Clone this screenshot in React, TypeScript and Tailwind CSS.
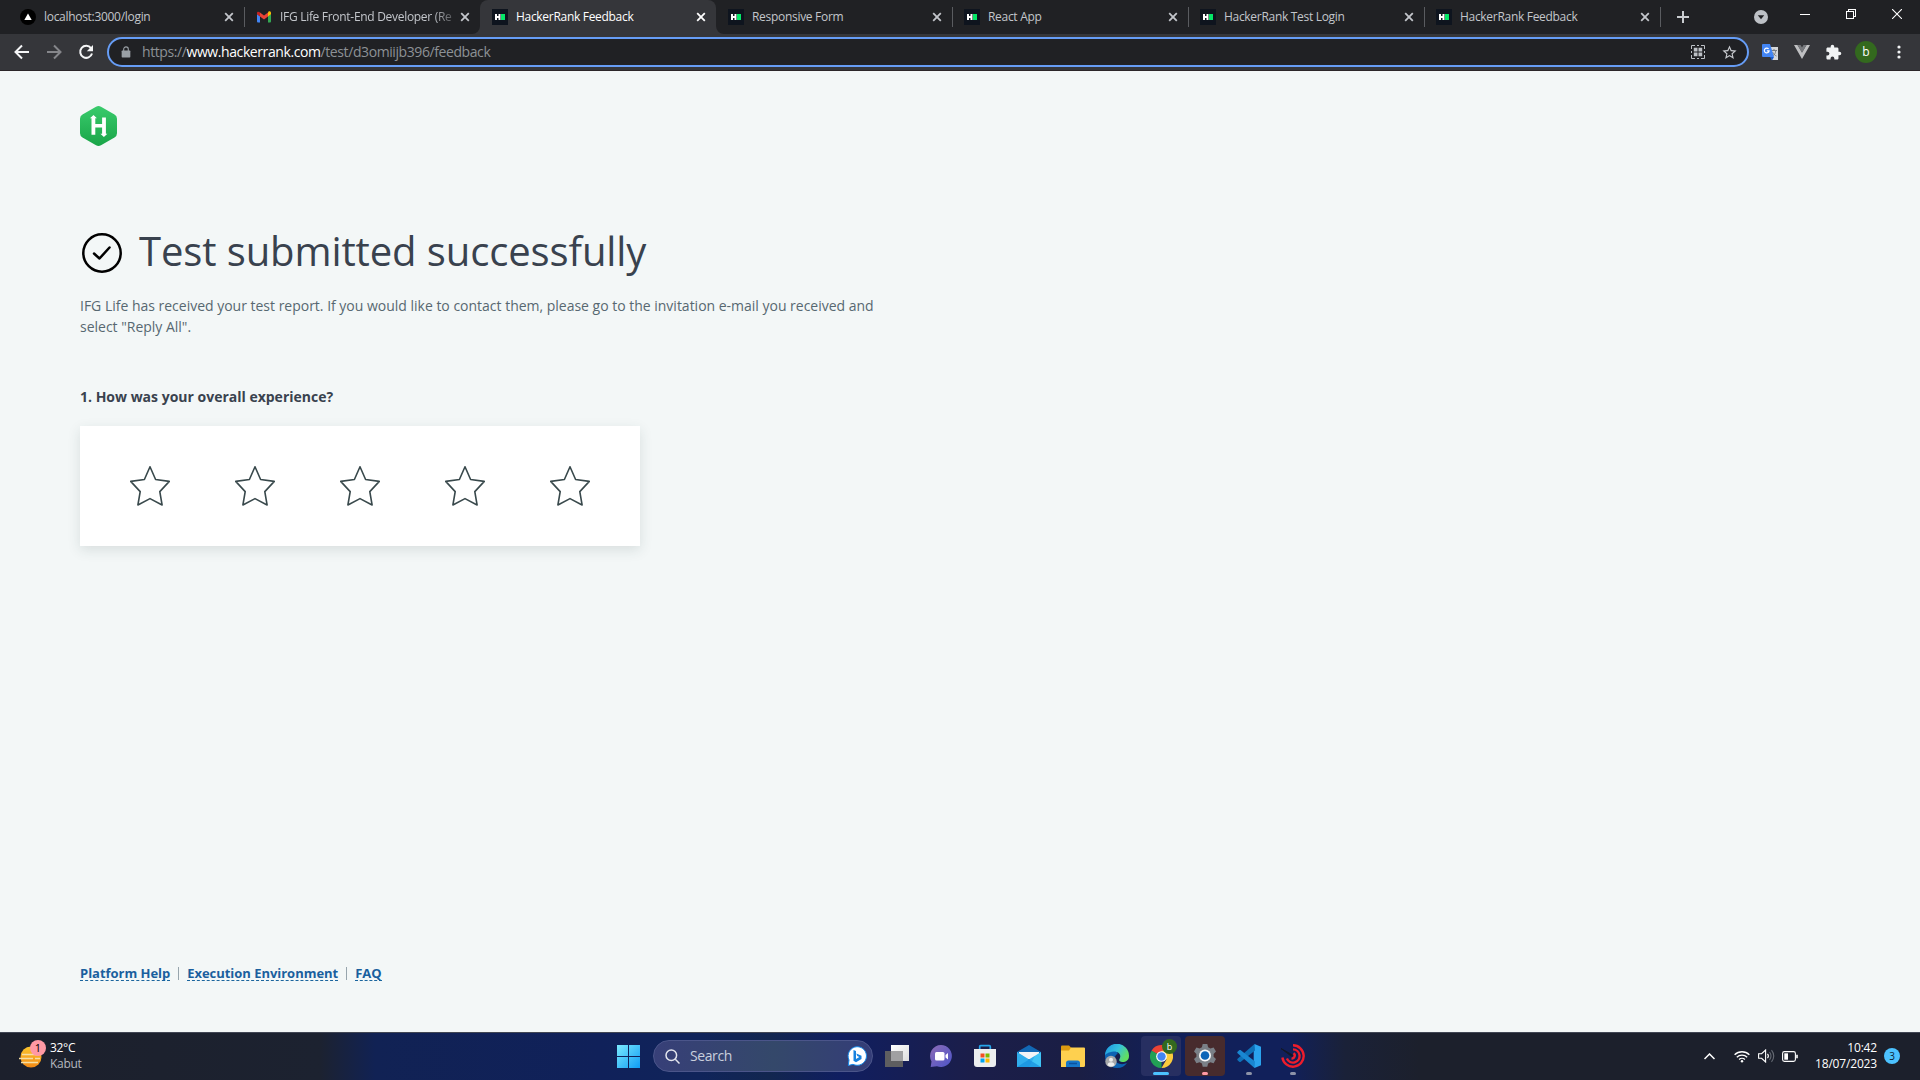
import React from "react";

type P = { className?: string };

const Close = ({ active }: { active?: boolean }) => (
  <svg viewBox="0 0 16 16" className={active ? "size-4 text-white" : "size-4 text-[#c3c6cb]"}>
    <path d="M4.2 4.2l7.6 7.6M11.8 4.2l-7.6 7.6" stroke="currentColor" strokeWidth="1.8" fill="none" />
  </svg>
);

const HrFavicon = () => (
  <svg viewBox="0 0 16 16" className="size-4 shrink-0">
    <rect width="16" height="16" fill="#0e141e" />
    <path d="M3 5h2v2h1.500v-2h2v6h-2v-2h-1.500v2h-2z" fill="#fff" />
    <rect x="9" y="5" width="4" height="6" fill="#05e767" />
  </svg>
);

const NextFavicon = () => (
  <svg viewBox="0 0 16 16" className="size-4 shrink-0">
    <circle cx="8" cy="8" r="8" fill="#000" />
    <path d="M8 4.500l3.700 6.500h-7.400z" fill="#fff" />
  </svg>
);

const GmailFavicon = () => (
  <svg viewBox="0 0 16 16" className="size-4 shrink-0">
    <path d="M1 5v7.500a1 1 0 0 0 1 1h2v-6.300z" fill="#4285f4" />
    <path d="M12 13.500h2a1 1 0 0 0 1-1v-7.500l-3 2.200z" fill="#34a853" />
    <path d="M12 3.500v4l3-2.300v-1.200c0-1.500-1.500-2.200-2.600-1.300z" fill="#fbbc04" />
    <path d="M4 7.500v-4l4 3 4-3v4l-4 3z" fill="#ea4335" />
    <path d="M1 4v1.200l3 2.300v-4l-.4-.3c-1.100-.9-2.600-.6-2.600.8z" fill="#c5221f" />
  </svg>
);

type TabData = { title: string; icon: React.ReactNode; active?: boolean; sep?: boolean; fade?: boolean };

const tabs: TabData[] = [
  { title: "localhost:3000/login", icon: <NextFavicon />, sep: true },
  { title: "IFG Life Front-End Developer (Re", icon: <GmailFavicon />, fade: true },
  { title: "HackerRank Feedback", icon: <HrFavicon />, active: true },
  { title: "Responsive Form", icon: <HrFavicon />, sep: true },
  { title: "React App", icon: <HrFavicon />, sep: true },
  { title: "HackerRank Test Login", icon: <HrFavicon />, sep: true },
  { title: "HackerRank Feedback", icon: <HrFavicon />, sep: true },
];

const Tab = ({ t }: { t: TabData }) => (
  <div
    className={
      t.active
        ? "relative flex h-[34px] w-[236px] items-center rounded-t-lg bg-[#35363a] pl-3 pr-[7px]"
        : "relative flex h-[34px] w-[236px] items-center pl-3 pr-[7px]"
    }
  >
    {t.icon}
    <div
      className={`ml-2 w-[173px] whitespace-nowrap text-[12px] leading-4 ${t.active ? "text-white" : "text-[#c3c6cb]"} ${t.fade ? "tracking-[-0.3px] [mask-image:linear-gradient(to_right,black_88%,rgba(0,0,0,0.3))]" : "tracking-[-0.3px]"}`}
    >
      {t.title}
    </div>
    <div className="ml-auto">
      <Close active={t.active} />
    </div>
    {t.sep && <span className="absolute -right-px top-[7px] h-5 w-px bg-[#5a5c60]" />}
    {t.active && (
      <>
        <svg viewBox="0 0 8 8" className="absolute -left-2 bottom-0 size-2">
          <path d="M8 0v8h-8a8 8 0 0 0 8-8z" fill="#35363a" />
        </svg>
        <svg viewBox="0 0 8 8" className="absolute -right-2 bottom-0 size-2">
          <path d="M0 0v8h8a8 8 0 0 1-8-8z" fill="#35363a" />
        </svg>
      </>
    )}
  </div>
);

const TabStrip = () => (
  <div className="flex h-[34px] bg-[#202124] pl-2">
    {tabs.map((t, i) => (
      <Tab key={i} t={t} />
    ))}
    <svg viewBox="0 0 14 14" className="ml-[16px] mt-[10px] size-[14px] text-[#c9ccd0]">
      <path d="M7 1v12M1 7h12" stroke="currentColor" strokeWidth="2" />
    </svg>
    <svg viewBox="0 0 14 14" className="ml-[64px] mt-[10px] size-[14px]">
      <circle cx="7" cy="7" r="7" fill="#bdc1c6" />
      <path d="M3.800 5.300h6.400l-3.200 4z" fill="#202124" />
    </svg>
    <svg viewBox="0 0 10 10" className="ml-[32px] mt-[9px] size-[10px]" shapeRendering="crispEdges">
      <path d="M0 5.500h10" stroke="#fff" />
    </svg>
    <svg viewBox="0 0 10 10" className="ml-[36px] mt-[9px] size-[10px]" shapeRendering="crispEdges" fill="none" stroke="#fff">
      <path d="M.5 2.500h7v7h-7zM2.500 2.500v-2h7v7h-2" />
    </svg>
    <svg viewBox="0 0 10 10" className="ml-[36px] mt-[9px] size-[10px]">
      <path d="M0 0l10 10M10 0l-10 10" stroke="#fff" strokeWidth="1.100" />
    </svg>
  </div>
);

const Toolbar = () => (
  <div className="flex h-[37px] items-center border-b border-[#2b2629] bg-[#35363a] pl-[14px]">
    <svg viewBox="0 0 16 16" className="size-4" fill="none" stroke="#f5f6f7" strokeWidth="2">
      <path d="M15 8h-13M8 1.500l-6.500 6.500 6.500 6.500" />
    </svg>
    <svg viewBox="0 0 16 16" className="ml-4 size-4" fill="none" stroke="#85868a" strokeWidth="2">
      <path d="M1 8h13M8 1.500l6.500 6.500-6.500 6.500" />
    </svg>
    <svg viewBox="0 0 16 16" className="ml-4 size-4" fill="none" stroke="#f5f6f7" strokeWidth="2">
      <path d="M13 4.200a6 6 0 1 0 1 5.300" />
      <path d="M15 1v6.300h-6.200z" fill="#f5f6f7" stroke="none" />
    </svg>
    <div className="ml-[13px] flex h-[30px] w-[1642px] items-center rounded-full border-2 border-[#669df6] bg-[#202124] pl-[12px] pr-[9px]">
      <svg viewBox="0 0 10 13" className="h-[12px] w-[10px]">
        <path d="M1 5h8q.7 0 .7.700v6q0 .8-.7.800h-8q-.7 0-.7-.8v-6q0-.7.700-.7z" fill="#9aa0a6" />
        <path d="M2.500 5.500v-2a2.500 2.500 0 0 1 5 0v2" fill="none" stroke="#9aa0a6" strokeWidth="1.200" />
      </svg>
      <div className="ml-[11px] whitespace-nowrap text-[14px] leading-5 tracking-[-0.41px] text-[#8d9196]">
        https://<span className="text-white">www.hackerrank.com</span>/test/d3omiijb396/feedback
      </div>
      <svg viewBox="0 0 14 14" className="ml-auto size-[14px]" fill="none" stroke="#bdc1c6">
        <path d="M.5 4v-3.500h3.500M6 .5h2M10 .5h3.500v3.500M13.500 6v2M13.500 10v3.500h-3.500M8 13.500h-2M4 13.500h-3.500v-3.500M.5 8v-2" />
        <path d="M2.800 2.800h3.700v3.700h-3.700zM7.500 2.800h3.700v3.700h-3.700zM2.800 7.500h3.700v3.700h-3.700zM7.500 7.500h3.700v3.700h-3.700z" fill="#bdc1c6" stroke="none" />
      </svg>
      <svg viewBox="0 0 24 24" className="ml-[16px] size-[17px]">
        <path
          d="M22 9.240l-7.190-.62L12 2 9.190 8.630 2 9.240l5.460 4.730L5.820 21 12 17.270 18.180 21l-1.630-7.030L22 9.240zM12 15.400l-3.760 2.270 1-4.280-3.320-2.880 4.380-.38L12 6.100l1.710 4.040 4.380.38-3.320 2.880 1 4.280L12 15.400z"
          fill="#c8cbcf"
        />
      </svg>
    </div>
    <svg viewBox="0 0 17 17" className="ml-[13px] size-[17px]">
      <path d="M6 3h10v13h-6z" fill="#d5d7da" />
      <path d="M9 6.500h6M12 5v1.500M10.500 12c2-1 3-3 3.200-5M10.500 8c1 2 2.500 3.500 4 4" stroke="#6f7378" fill="none" strokeWidth=".9" />
      <path d="M1 0h7l4 13h-11q-1 0-1-1v-11q0-1 1-1z" fill="#4285f4" />
      <path d="M8 13h4l-2 3.500z" fill="#1b5bcb" />
      <path d="M6.600 5a2.400 2.400 0 1 0 .5 1.800h-2.200" fill="none" stroke="#fff" strokeWidth="1.200" />
    </svg>
    <svg viewBox="0 0 16 14" className="ml-[15px] h-[14px] w-4">
      <path d="M0 0h3.500l4.500 7.500 4.500-7.500h3.500l-8 14z" fill="#bfc0c2" />
      <path d="M3.500 0h3l1.500 2.600 1.500-2.600h3l-4.500 7.700z" fill="#77797d" />
    </svg>
    <svg viewBox="0 0 24 24" className="ml-[15px] size-[17px]">
      <path d="M20.500 11H19V7c0-1.100-.9-2-2-2h-4V3.500a2.500 2.500 0 0 0-5 0V5H4c-1.100 0-2 .9-2 2v3.800h1.500a2.700 2.700 0 0 1 0 5.400H2V20c0 1.100.9 2 2 2h3.800v-1.500a2.700 2.700 0 0 1 5.400 0V22H17c1.100 0 2-.9 2-2v-4h1.500a2.500 2.500 0 0 0 0-5z" fill="#f1f3f4" />
    </svg>
    <div className="ml-[13px] grid size-[22px] place-items-center rounded-full bg-[#33691e] text-[12px] leading-none text-white">b</div>
    <svg viewBox="0 0 4 14" className="ml-[20px] h-[14px] w-1">
      <circle cx="2" cy="2" r="1.600" fill="#f1f3f4" />
      <circle cx="2" cy="7" r="1.600" fill="#f1f3f4" />
      <circle cx="2" cy="12" r="1.600" fill="#f1f3f4" />
    </svg>
  </div>
);

const Logo = () => (
  <svg viewBox="0 0 37 40" className="block h-10 w-[37px]">
    <defs>
      <linearGradient id="hr" x1="0" y1="0" x2="0" y2="1">
        <stop offset="0" stopColor="#39cb6c" />
        <stop offset="1" stopColor="#19a548" />
      </linearGradient>
    </defs>
    <path
      d="M16 .8q2.500-1.400 5 0l13.500 7.800q2.500 1.400 2.500 4.200v14.400q0 2.800-2.500 4.200l-13.500 7.800q-2.500 1.400-5 0l-13.500-7.800q-2.500-1.400-2.500-4.200v-14.400q0-2.800 2.500-4.200z"
      fill="url(#hr)"
    />
    <path
      d="M13.500 9l3.400 3.200h-1.600v5.800h6.800v-6.500h3.800v16.300h1.500l-3.500 3.200-3.500-3.200h1.700v-6.200h-6.800v7.200h-3.800v-16.600h-1.500z"
      fill="#fff"
    />
  </svg>
);

const Star = () => (
  <svg viewBox="0 0 40 40" className="size-10" fill="none" stroke="#39494c" strokeWidth="1.600" strokeLinejoin="round">
    <path d="M20 .8l5.600 12.700 13.700 1.900-9.500 10.200 2.300 13.400-12.100-6.400-12.100 6.400 2.300-13.400-9.500-10.200 13.700-1.900z" />
  </svg>
);

const Link = ({ children }: { children: React.ReactNode }) => (
  <a className="border-b border-dashed border-[#1a659e] text-[13px] font-bold leading-[14px] tracking-[-0.03px] text-[#1a5f9e]">{children}</a>
);

const Page = () => (
  <main className="flex h-[961px] flex-col items-start bg-[#f3f7f7] pl-20 pt-[35px]">
    <Logo />
    <div className="mt-[76px] flex h-[60px] items-center">
      <svg viewBox="0 0 40 40" className="ml-[2px] mt-[2px] size-10" fill="none" stroke="#000" strokeWidth="2.500">
        <circle cx="20" cy="20" r="18.700" />
        <path d="M12 20.500l5.500 5 10-11" strokeLinecap="round" strokeLinejoin="round" />
      </svg>
      <h1 className="-mt-[2px] ml-[17px] whitespace-nowrap text-[40px] leading-[60px] tracking-[-0.1px] text-[#39424e]">
        Test submitted successfully
      </h1>
    </div>
    <p className="mt-[13px] w-[800px] text-[14px] leading-[21px] tracking-[-0.01px] text-[#576871]">
      IFG Life has received your test report. If you would like to contact them, please go to the invitation e-mail you received and
      select "Reply All".
    </p>
    <h2 className="mt-[50px] text-[14px] font-bold leading-[20px] text-[#39424e]">1. How was your overall experience?</h2>
    <div className="mt-[19px] flex h-[120px] w-[560px] items-center justify-between bg-white px-[50px] shadow-[0_4px_12px_rgba(40,60,60,0.13)]">
      {[0, 1, 2, 3, 4].map((i) => (
        <Star key={i} />
      ))}
    </div>
    <div className="mt-[420px] flex items-center">
      <Link>Platform Help</Link>
      <span className="ml-[8px] mr-[8px] h-[13px] w-px bg-[#97a5ad]" />
      <Link>Execution Environment</Link>
      <span className="ml-[8px] mr-[8px] h-[13px] w-px bg-[#97a5ad]" />
      <Link>FAQ</Link>
    </div>
  </main>
);

const Cell = ({ children, className = "" }: P & { children: React.ReactNode }) => (
  <div className={`relative grid size-10 shrink-0 place-items-center rounded ${className}`}>{children}</div>
);

const Dot = ({ className }: P) => <span className={`absolute bottom-[1px] left-1/2 h-[3px] -translate-x-1/2 rounded-full ${className}`} />;

const TaskIcons = () => (
  <div className="flex items-center">
    <svg viewBox="0 0 23 23" className="size-[23px]">
      <defs>
        <linearGradient id="win" x1="0" y1="0" x2="1" y2="1">
          <stop offset="0" stopColor="#7beafe" />
          <stop offset="1" stopColor="#0f9cf5" />
        </linearGradient>
      </defs>
      <path d="M0 0h11v11h-11zM12 0h11v11h-11zM0 12h11v11h-11zM12 12h11v11h-11z" fill="url(#win)" />
    </svg>
    <div className="ml-[13px] flex h-8 w-[220px] items-center rounded-full border border-[#4b558a] bg-[linear-gradient(90deg,#373f78,#34486a_55%,#343d78)] pl-[11px] pr-[5px]">
      <svg viewBox="0 0 15 15" className="size-[15px]" fill="none" stroke="#e4e6ee" strokeWidth="1.500">
        <circle cx="6.300" cy="6.300" r="5.300" />
        <path d="M10.300 10.300l4.200 4.200" />
      </svg>
      <span className="ml-[10px] text-[14px] leading-5 tracking-[-0.4px] text-[#c9cfdd]">Search</span>
      <svg viewBox="0 0 20 20" className="ml-auto size-5">
        <path d="M10 .7a9.300 9.300 0 1 1-4 17.600l-4.700 1.200.7-5.500a9.300 9.300 0 0 1 8-13.300z" fill="#fff" stroke="#1689e8" strokeWidth="1" />
        <path d="M6.500 4l2.500 1v8l3.300-1.900-2-1-1-2.600 5.200 2.200v3.300l-5.500 3.200-2.500-1.500z" fill="#1682df" />
      </svg>
    </div>
    <svg viewBox="0 0 24 22" className="ml-3 h-[22px] w-6">
      <defs>
        <linearGradient id="tv" x1="0" y1="0" x2="1" y2="1">
          <stop offset="0" stopColor="#fff" />
          <stop offset="1" stopColor="#ddd" />
        </linearGradient>
      </defs>
      <rect x="6" y="0" width="18" height="16" fill="url(#tv)" />
      <rect x="0" y="6" width="18" height="16" fill="#5e5e60" />
      <rect x="6" y="6" width="12" height="10" fill="#a0a0a2" />
    </svg>
    <div className="ml-3 flex items-center gap-1">
      <Cell>
        <svg viewBox="0 0 24 24" className="size-6">
          <defs>
            <linearGradient id="chat" x1="0" y1="0" x2="1" y2="1">
              <stop offset="0" stopColor="#8d6bb5" />
              <stop offset="1" stopColor="#4c55c9" />
            </linearGradient>
          </defs>
          <path d="M12 1a11 11 0 1 1-4 21.300l-6.300.7.800-5.500a11 11 0 0 1 9.500-16.500z" fill="url(#chat)" />
          <rect x="6" y="8" width="9.500" height="8.500" rx="1.500" fill="#fff" />
          <path d="M16.500 11l2.500-2v6.500l-2.500-2z" fill="#fff" />
        </svg>
      </Cell>
      <Cell>
        <svg viewBox="0 0 24 24" className="size-6">
          <path d="M6.700 6v-3.300q0-1 1-1h8.600q1 0 1 1v3.300" fill="none" stroke="#25a5ea" strokeWidth="1.700" />
          <path d="M1 5h22v15q0 3-3 3h-16q-3 0-3-3z" fill="#eceeef" />
          <path d="M7.500 9.500h4v4h-4z" fill="#f25022" />
          <path d="M12.500 9.500h4v4h-4z" fill="#7fba00" />
          <path d="M7.500 14.500h4v4h-4z" fill="#00a4ef" />
          <path d="M12.500 14.500h4v4h-4z" fill="#ffb900" />
        </svg>
      </Cell>
      <Cell>
        <svg viewBox="0 0 24 24" className="size-6">
          <path d="M0 8l12-7 12 7v6h-24z" fill="#1268b5" />
          <path d="M2 8h20v7h-20z" fill="#f2f4f7" />
          <path d="M0 8v15h24v-15l-12 7.500z" fill="#40c4f5" />
          <path d="M0 8v15h12l6-11.200-6 3.700z" fill="#1c93e3" opacity=".45" />
          <path d="M0 23l12-7.500 12 7.500z" fill="#158fdd" opacity=".7" />
        </svg>
      </Cell>
      <Cell>
        <svg viewBox="0 0 24 24" className="size-6">
          <path d="M0 2.500q0-1 1-1h7l3 3-2 3h-9z" fill="#dc9a10" />
          <path d="M10 3.500h13q1 0 1 1v17q0 1.500-1.500 1.500h-22.500v-16.500h8z" fill="#fed04f" />
          <path d="M5 23v-4q0-2.500 2.500-2.500h9q2.500 0 2.500 2.500v4z" fill="#1677c9" />
          <path d="M8 19.500h8" stroke="#0b519d" strokeWidth="1.500" />
        </svg>
      </Cell>
      <Cell>
        <svg viewBox="0 0 24 24" className="size-6">
          <defs>
            <linearGradient id="edge" x1="0" y1="0" x2="1" y2=".5">
              <stop offset="0" stopColor="#1b94e1" />
              <stop offset=".55" stopColor="#35c1dc" />
              <stop offset="1" stopColor="#61df60" />
            </linearGradient>
          </defs>
          <path d="M12 0a12 12 0 0 0-12 12c0 7 5 12 12 12 4.500 0 8-2 10-5-5 2.500-12 1-12-5 0-2 1-3.500 2.500-4z" fill="#0d63b3" />
          <path d="M0 11.500a12 12 0 0 1 24 .5c0 4-3 6-6.500 6-3 0-4-1.500-3-3 2.500-4-1-8-6-7.500s-8 2.500-8.500 4z" fill="url(#edge)" />
          <circle cx="6" cy="17.500" r="5.700" fill="#a6a8aa" />
          <circle cx="6" cy="15.700" r="2" fill="#eee" />
          <path d="M2.500 21.300q0-3 3.500-3t3.500 3q-3.500 2.500-7 0z" fill="#eee" />
        </svg>
      </Cell>
      <Cell className="bg-[#272f61]">
        <svg viewBox="0 0 24 24" className="size-[23px]">
          <path d="M12 12l-10.400-6a12 12 0 0 1 20.800 0z" fill="#ea4335" />
          <path d="M12 12v12a12 12 0 0 1-10.400-18z" fill="#22a055" />
          <path d="M12 6h10.400a12 12 0 0 1-10.400 18l5.200-9z" fill="#fbcc3c" />
          <path d="M1.600 6l5.200 9 5-3z" fill="#22a055" />
          <circle cx="12" cy="12" r="5.600" fill="#fff" />
          <circle cx="12" cy="12" r="4.400" fill="#4285f4" />
        </svg>
        <span className="absolute right-[4px] top-[3px] grid size-[15px] place-items-center rounded-full bg-[#33691e] text-[9px] leading-none text-white">b</span>
        <Dot className="w-4 bg-[#4cc2ff]" />
      </Cell>
      <Cell className="bg-[#472b2d]">
        <svg viewBox="0 0 24 24" className="size-6">
          <path
            d="M9.700 0h4.600l.8 3.200 2.300 1.300 3.200-.9 2.400 4-2.400 2.400v2.700l2.400 2.400-2.400 4.100-3.200-.9-2.300 1.300-.8 3.200h-4.600l-.8-3.200-2.300-1.300-3.200.9-2.400-4.100 2.400-2.400v-2.700l-2.400-2.400 2.400-4 3.200.9 2.300-1.300z"
            fill="#7a8087"
          />
          <circle cx="12" cy="11.500" r="6" fill="#fff" opacity=".95" />
          <circle cx="12" cy="11.500" r="4.300" fill="#0c65b8" />
        </svg>
        <Dot className="w-1.5 bg-[#ff99a4]" />
      </Cell>
      <Cell>
        <svg viewBox="0 0 24 24" className="size-6">
          <path d="M17.500 0l6.500 2.800v18.400l-6.500 2.800-.8-1.500v-20z" fill="#2aa3ee" />
          <path d="M17.500 0l.5 6.500-14.500 11.500h-1l-2.200-2v-1z" fill="#0e70b8" />
          <path d="M17.500 24l.5-6.500-14.500-11.500h-1l-2.200 2v1z" fill="#1987d2" />
        </svg>
        <Dot className="w-1.5 bg-[#8d93a8]" />
      </Cell>
      <Cell>
        <svg viewBox="0 0 24 24" className="size-6" fill="none" stroke="#ee1d2c" strokeWidth="2.400">
          <path d="M12 1.300A10.700 10.700 0 1 1 1.400 13.500" />
          <path d="M12 5.400A6.600 6.600 0 1 1 5.900 14.500" />
          <path d="M12.500 9.300A2.800 2.800 0 0 1 10.500 14.400" />
          <path d="M0 4.500l11.500 6.500-1 1.300z" fill="#131826" stroke="#131826" strokeWidth="1" />
        </svg>
        <Dot className="w-1.5 bg-[#8d93a8]" />
      </Cell>
    </div>
  </div>
);

const Taskbar = () => (
  <div className="flex h-12 items-center border-t border-[#414654] bg-[linear-gradient(90deg,#1c202c_0px,#1c2230_320px,#112254_375px,#10215a_600px,#10245a_700px,#12264f_770px,#101e60_840px,#1b1e4a_970px,#1a1e44_1080px,#11205a_1180px,#11205a_1290px,#1a2138_1345px,#1c202c_1420px)] pb-px">
    <div className="flex w-[617px] items-center pl-[18px]">
      <div className="relative -mt-px h-[30px] w-[28px]">
        <svg viewBox="0 0 24 24" className="absolute left-0 top-[4px] size-6">
          <defs>
            <linearGradient id="sun" x1="0" y1="0" x2="0" y2="1">
              <stop offset="0" stopColor="#fbc52d" />
              <stop offset="1" stopColor="#f38a16" />
            </linearGradient>
          </defs>
          <circle cx="13" cy="12" r="10.500" fill="url(#sun)" />
          <path d="M4 9.500h15M1 13.500h14M17 13.500h5M3 17.500h17" stroke="#f6dfa5" strokeWidth="1.600" />
        </svg>
        <span className="absolute -top-px left-[12px] grid size-4 place-items-center rounded-full bg-[#ff99a4] text-[11px] leading-none text-black">1</span>
      </div>
      <div className="ml-[4px] text-[12px] leading-4 tracking-[-0.3px]">
        <div className="text-white">32°C</div>
        <div className="text-[#b5b8bf]">Kabut</div>
      </div>
    </div>
    <TaskIcons />
    <div className="ml-auto flex items-center pr-[20px] text-white">
      <svg viewBox="0 0 11 7" className="h-[7px] w-[11px]" fill="none" stroke="#fff" strokeWidth="1.500">
        <path d="M.5 6l5-5 5 5" />
      </svg>
      <svg viewBox="0 0 16 13" className="ml-[19px] h-[13px] w-4" fill="none" stroke="#fff" strokeWidth="1.300">
        <path d="M.6 4.800a10.500 10.500 0 0 1 14.800 0M2.800 7.300a7.400 7.400 0 0 1 10.400 0M5.100 9.500a4.200 4.200 0 0 1 5.800 0" />
        <circle cx="8" cy="11.300" r="1.200" fill="#fff" stroke="none" />
      </svg>
      <svg viewBox="0 0 17 14" className="ml-[8px] h-[14px] w-[17px]" fill="none" stroke="#fff" strokeWidth="1.100">
        <path d="M.6 4.700h3l4-3.700v12l-4-3.700h-3z" />
        <path d="M9.500 4.800q1.800 2.200 0 4.400" />
        <path d="M11.500 3q3 4 0 8M13.500 1.200q4.500 5.800 0 11.600" stroke="#666a74" />
      </svg>
      <svg viewBox="0 0 16 11" className="ml-[7px] h-[11px] w-4" fill="none" stroke="#fff" strokeWidth="1.100">
        <rect x=".6" y=".6" width="12.800" height="9.800" rx="1.800" />
        <rect x="2.300" y="2.300" width="3.700" height="6.400" fill="#fff" stroke="none" />
        <path d="M15 3.800v3.400" strokeWidth="1.600" />
      </svg>
      <div className="ml-[15px] w-[64px] whitespace-nowrap text-right text-[12px] leading-4 tracking-[-0.17px]">
        <div>10:42</div>
        <div>18/07/2023</div>
      </div>
      <span className="ml-[7px] grid size-4 place-items-center rounded-full bg-[#4cc2ff] text-[10px] leading-none text-[#0c2233]">3</span>
    </div>
  </div>
);

export default function App() {
  return (
    <div className="h-[1080px] w-[1920px] overflow-hidden font-['Open_Sans','Noto_Sans',sans-serif]">
      <TabStrip />
      <Toolbar />
      <Page />
      <Taskbar />
    </div>
  );
}
